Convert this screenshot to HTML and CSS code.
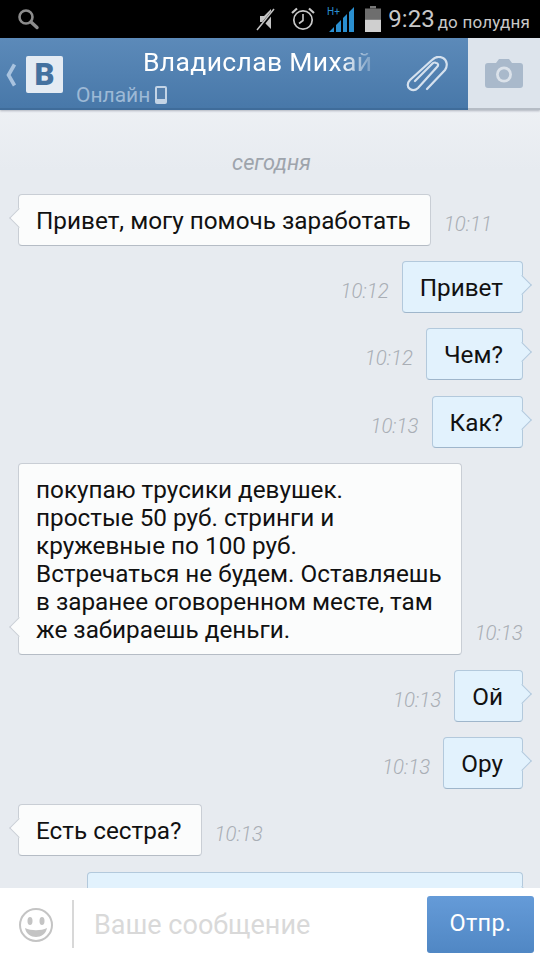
FILE: index.html
```html
<!DOCTYPE html>
<html lang="ru">
<head>
<meta charset="utf-8">
<title>Сообщения</title>
<link rel="stylesheet" href="styles.css">
</head>
<body>
<div class="screen">
  <div class="status">
    <svg class="st-search" width="24" height="24" viewBox="0 0 24 24"><circle cx="10" cy="10" r="6.500" fill="none" stroke="#8c8c8c" stroke-width="2.600"/><path d="M15 15l6 5.500" stroke="#8c8c8c" stroke-width="3.400" stroke-linecap="round"/></svg>
    <div class="st-right">
      <svg class="st-mute" width="24" height="26" viewBox="0 0 24 26"><path d="M5 10h4l7-7v20l-7-7H5z" fill="#c4c4c4"/><path d="M3 24L20 3" stroke="#000" stroke-width="3.500"/><path d="M2 24L19 3" stroke="#c4c4c4" stroke-width="1.500"/></svg>
      <svg class="st-alarm" width="26" height="26" viewBox="0 0 26 26"><circle cx="13" cy="14" r="9.200" fill="none" stroke="#c8c8c8" stroke-width="1.700"/><path d="M13 8v6.500l-4 3" fill="none" stroke="#c8c8c8" stroke-width="1.600"/><path d="M2 7l5-4.500M24 7l-5-4.500" stroke="#c8c8c8" stroke-width="2.200"/></svg>
      <svg class="st-signal" width="30" height="26" viewBox="0 0 30 26"><text x="0" y="9" class="hplus">H+</text><path d="M2 26l5-5v5zM9 26v-7l5-5v12zM16 26V12l4-4v18zM22 26V6l5-5v25z" fill="#2a8fd0"/></svg>
      <svg width="16" height="26" viewBox="0 0 16 26"><rect x="5" y="0" width="6" height="2.500" fill="#777"/><rect x="0" y="2.500" width="16" height="11" fill="#6e6e6e"/><rect x="0" y="13.500" width="16" height="12.500" fill="#cfcfcf"/></svg>
      <span class="st-time">9:23</span>
      <span class="st-ampm">до полудня</span>
    </div>
  </div>

  <header class="head">
    <div class="head-main">
      <svg class="back" width="12" height="24" viewBox="0 0 12 24"><path d="M8.500 1.500L2.500 12l6 10.500" fill="none" stroke="#a9c3df" stroke-width="3.600"/></svg>
      <div class="logo">В</div>
      <div class="who">
        <div class="name"><span class="name-text">Владислав Михай</span></div>
        <div class="online">Онлайн
          <svg width="12" height="18" viewBox="0 0 12 18"><rect x="0" y="0" width="12" height="18" rx="2" fill="#c3d4e6"/><rect x="2" y="2" width="8" height="11" fill="#5580ad"/></svg>
        </div>
      </div>
      <svg class="clip" width="44" height="40" viewBox="0 0 44 40"><path d="M21 33L39 14C42 10 41 4 37 2C33 0 29 1 26 4L4 24C1 27 1 31 4 33C7 35 10 34 12 32L31 11C33 9 32 7 30 7C29 6 27 7 26 8L9 25" fill="none" stroke="#d5e1ee" stroke-width="2.200" stroke-linecap="round"/></svg>
    </div>
    <div class="cam">
      <svg width="38" height="30" viewBox="0 0 38 30"><path d="M3 5h8l3-4h10l3 4h8a3 3 0 0 1 3 3v19a3 3 0 0 1-3 3H3a3 3 0 0 1-3-3V8a3 3 0 0 1 3-3z" fill="#a9b9cb"/><circle cx="19" cy="16.500" r="8" fill="#dbe2ea"/><circle cx="19" cy="16.500" r="5.200" fill="#a9b9cb"/></svg>
    </div>
  </header>

  <main class="chat">
    <div class="day">сегодня</div>
    <div class="row in"><div class="bubble">Привет, могу помочь заработать</div><span class="time">10:11</span></div>
    <div class="row out"><span class="time">10:12</span><div class="bubble">Привет</div></div>
    <div class="row out"><span class="time">10:12</span><div class="bubble">Чем?</div></div>
    <div class="row out"><span class="time">10:13</span><div class="bubble">Как?</div></div>
    <div class="row in"><div class="bubble">покупаю трусики девушек.<br>простые 50 руб. стринги и<br>кружевные по 100 руб.<br>Встречаться не будем. Оставляешь<br>в заранее оговоренном месте, там<br>же забираешь деньги.</div><span class="time">10:13</span></div>
    <div class="row out"><span class="time">10:13</span><div class="bubble">Ой</div></div>
    <div class="row out"><span class="time">10:13</span><div class="bubble">Ору</div></div>
    <div class="row in"><div class="bubble">Есть сестра?</div><span class="time">10:13</span></div>
    <div class="row out"><div class="bubble wide">&nbsp;</div></div>
  </main>

  <footer class="composer">
    <svg class="smile" width="36" height="36" viewBox="0 0 36 36"><circle cx="18" cy="18" r="16" fill="none" stroke="#c4c4c4" stroke-width="2"/><ellipse cx="12" cy="14" rx="2.500" ry="4" fill="#c4c4c4"/><ellipse cx="24" cy="14" rx="2.500" ry="4" fill="#c4c4c4"/><path d="M7 21c6 3 16 3 22 0c-1 6-6 9-11 9s-10-3-11-9z" fill="#c4c4c4"/></svg>
    <div class="sep"></div>
    <div class="ph">Ваше сообщение</div>
    <div class="send">Отпр.</div>
  </footer>
</div>
</body>
</html>
```
FILE: styles.css
```css
* { box-sizing: border-box; }
html, body { margin: 0; padding: 0; }
body { width: 540px; height: 960px; overflow: hidden; font-family: Roboto, "Noto Sans", sans-serif; }
.screen { width: 540px; height: 960px; display: flex; flex-direction: column; background: #e7ebf0; }

.status { height: 38px; flex: none; background: #000; display: flex; align-items: center; justify-content: space-between; padding: 0 10px 0 16px; }
.st-search { margin-top: -1px; }
.st-right { display: flex; align-items: center; gap: 6px; }
.st-mute, .st-alarm { margin-right: 5px; }
.st-signal { margin-right: 2px; }
.hplus { font: 10px Roboto, sans-serif; fill: #2a8fd0; }
.st-time { font-size: 24px; color: #c8c8c8; margin: 0 -3px 0 1px; font-weight: 400; }
.st-ampm { font-size: 17px; color: #c8c8c8; margin-top: 6px; letter-spacing: .2px; }

.head { height: 72px; flex: none; display: flex; box-shadow: 0 1px 2px rgba(60,70,90,.35); position: relative; }
.head-main { width: 468px; display: flex; align-items: flex-start; background: linear-gradient(#5c8ab9, #4878a9); padding-left: 6px; border-bottom: 2px solid #3f6c9a; }
.back { margin-top: 25px; flex: none; }
.logo { width: 37px; height: 37px; margin: 18px 0 0 8px; flex: none; background: #e4ebf3; border-radius: 2px; color: #44719f; font-weight: 900; font-size: 31px; line-height: 37px; text-align: center; }
.who { width: 296px; margin-left: 13px; flex: none; }
.name { margin: 6px 0 0 67px; width: 229px; height: 36px; overflow: hidden; white-space: nowrap; font-size: 26.500px; line-height: 36px; color: #fff; letter-spacing: .35px; -webkit-mask-image: linear-gradient(90deg, #000 86%, rgba(0,0,0,.2) 100%); mask-image: linear-gradient(90deg, #000 86%, rgba(0,0,0,.2) 100%); }
.online { display: flex; align-items: center; gap: 5px; margin-top: 2px; font-size: 21px; line-height: 26px; color: #9db9d6; }
.clip { margin: 18px 0 0 34px; flex: none; }
.cam { width: 72px; background: #dde4ec; border-bottom: 2px solid #b5bcc5; display: flex; align-items: center; justify-content: center; }

.chat { flex: 1; min-height: 0; overflow: hidden; background: linear-gradient(#edf0f4, #e7ebf0 60px); padding: 0 17px 0 18px; display: flex; flex-direction: column; }
.day { font-size: 21.800px; font-style: italic; color: #9ea4ac; text-align: center; line-height: 28px; margin: 39px 0 17px; flex: none; padding-left: 2px; }
.row { display: flex; align-items: flex-end; gap: 13px; margin-bottom: 15.200px; flex: none; }
.out { justify-content: flex-end; }
.bubble { position: relative; padding: 12px 19px 10px 17px; font-size: 24.300px; line-height: 28px; color: #111; border-radius: 4px; white-space: nowrap; }
.bubble::after { content: ""; position: absolute; width: 13px; height: 13px; transform: rotate(45deg); bottom: 20px; }
.in .bubble { background: #fbfcfc; border: 1px solid #c9ced5; border-bottom-color: #b5bcc5; }
.in .bubble::after { left: -7px; background: #fbfcfc; border-left: 1px solid #c9ced5; border-bottom: 1px solid #c9ced5; }
.out .bubble { background: #e2f2fd; border: 1px solid #b3c9dc; border-bottom-color: #9fb6cb; }
.out .bubble::after { right: -7px; background: #e2f2fd; border-right: 1px solid #b3c9dc; border-top: 1px solid #b3c9dc; }
.wide { width: 436px; }
.time { font-size: 20.400px; font-style: italic; font-weight: 300; color: #a9aeb5; line-height: 26px; margin-bottom: 9px; }

.composer { height: 72px; flex: none; background: #fff; display: flex; align-items: flex-start; position: relative; }
.smile { margin: 19px 0 0 18px; flex: none; }
.sep { width: 2px; height: 48px; margin: 12px 0 0 18px; background: #d8d8d8; flex: none; }
.ph { width: 333px; margin: 22px 0 0 20px; flex: none; font-size: 27px; line-height: 30px; color: #d9d9d9; }
.send { width: 107px; height: 57px; margin-top: 8px; border-radius: 3px; background: linear-gradient(#659bd8, #5087c4); color: #fff; font-size: 23.500px; line-height: 55px; text-align: center; letter-spacing: .3px; }
```
